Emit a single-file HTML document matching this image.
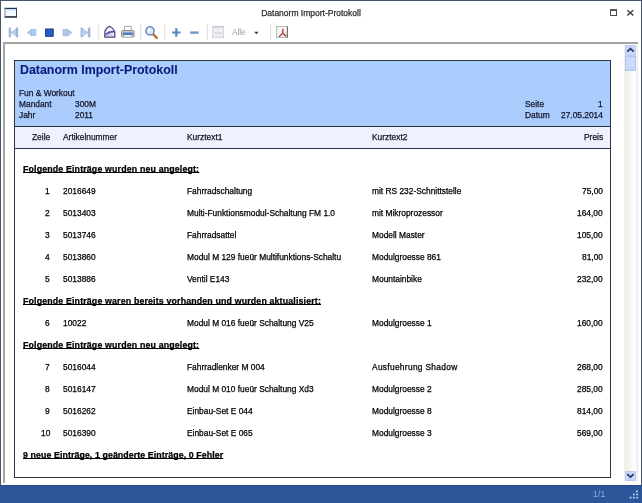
<!DOCTYPE html>
<html><head><meta charset="utf-8">
<style>
*{margin:0;padding:0;box-sizing:border-box}
html,body{width:642px;height:503px;overflow:hidden;background:#fff;font-family:"Liberation Sans",sans-serif}
.a{position:absolute}
.t{position:absolute;white-space:pre;will-change:transform;-webkit-text-stroke:0.25px currentColor}
</style></head><body>
<div class="a" style="left:0;top:0;width:642px;height:503px;background:#fff;border:1px solid #465670;border-bottom:none"></div>
<!-- title bar -->
<svg class="a" style="left:0;top:0" width="642" height="45" viewBox="0 0 642 45">
 <!-- window icon -->
 <rect x="4.5" y="7.8" width="12.5" height="9.8" fill="#f2f8ff"/>
 <rect x="4.5" y="7.8" width="12.5" height="1.5" fill="#1c3050"/>
 <rect x="4.5" y="16.2" width="12.5" height="1.5" fill="#1a2034"/>
 <rect x="4.5" y="7.8" width="1" height="9.9" fill="#8a92a2"/>
 <rect x="16" y="7.8" width="1" height="9.9" fill="#3a4050"/>
 <rect x="5.5" y="9.3" width="10.5" height="1.5" fill="#d8ecfc"/>
 <!-- maximize -->
 <rect x="610.5" y="10" width="6" height="5.5" fill="none" stroke="#4a4a4a" stroke-width="1"/>
 <rect x="610" y="9.2" width="7" height="1.6" fill="#4a4a4a"/>
 <!-- close -->
 <path d="M627.3 10.2L633.3 15.4M633.3 10.2L627.3 15.4" stroke="#464646" stroke-width="1.4"/>
 <!-- toolbar: first -->
 <g fill="#a6bbe0" stroke="#94aad6" stroke-width="0.6">
  <rect x="9" y="28" width="1.8" height="9"/>
  <path d="M17.6 28.2L11 32.5L17.6 36.8Z" fill="#bcd0f0"/>
  <rect x="16.2" y="28" width="1.6" height="9"/>
 </g>
 <!-- prev -->
 <g stroke="#9cb2dc" stroke-width="0.6">
  <path d="M32 29L27 32.5L32 36Z" fill="#b4c8ec"/>
  <rect x="31.5" y="29.3" width="4.4" height="6.4" fill="#a8d0f4"/>
 </g>
 <!-- stop -->
 <rect x="45.6" y="29" width="7.6" height="7.3" fill="#2262c4" stroke="#153a84" stroke-width="1"/>
 <!-- next -->
 <g stroke="#9cb2dc" stroke-width="0.6">
  <rect x="63" y="29.3" width="4.4" height="6.6" fill="#b0cce8"/>
  <path d="M67 29L72 32.6L67 36.2Z" fill="#b4c8ec"/>
 </g>
 <!-- last -->
 <g fill="#a6bbe0" stroke="#94aad6" stroke-width="0.6">
  <rect x="81" y="28" width="1.6" height="9"/>
  <path d="M81.4 28.2L88 32.5L81.4 36.8Z" fill="#bcd0f0"/>
  <rect x="88.2" y="28" width="1.8" height="9"/>
 </g>
 <!-- separators -->
 <g fill="#dcdcd8">
  <rect x="98.3" y="24" width="1" height="16"/>
  <rect x="140.2" y="24" width="1" height="16"/>
  <rect x="164.3" y="24" width="1" height="16"/>
  <rect x="206.8" y="24" width="1" height="16"/>
  <rect x="270.2" y="24" width="1" height="16"/>
 </g>
 <!-- mail -->
 <path d="M104.8 31.6Q106.2 27.6 109.6 26.2Q113.2 27.8 114.8 31.8V37.2H104.8Z" fill="#f2f0fc" stroke="#48407a" stroke-width="1.2"/>
 <path d="M105.3 33.8Q109 30 114.3 30.8V32.4Q110.2 32.2 105.3 35.4Z" fill="#6454b0"/>
 <path d="M105.4 36.8L109.6 34.2L114.2 36.8" fill="none" stroke="#9890c8" stroke-width="0.8"/>
 <!-- printer -->
 <rect x="124.6" y="26.3" width="6.6" height="5" fill="#fff" stroke="#9a9a9a" stroke-width="0.9"/>
 <rect x="121.5" y="30.5" width="12.6" height="6.6" rx="1" fill="#c4c4c4" stroke="#8c8c8c" stroke-width="0.9"/>
 <rect x="122.8" y="32.6" width="10" height="2.2" fill="#3a78c8"/>
 <rect x="124.5" y="35.2" width="6.8" height="1.6" fill="#f0f0f0"/>
 <!-- magnifier -->
 <path d="M153.2 34.4L156.8 37.9" stroke="#b8742c" stroke-width="2.3" stroke-linecap="round"/>
 <circle cx="150" cy="30.9" r="4.1" fill="#d8e6fc" stroke="#3e60a8" stroke-width="1.1"/>
 <circle cx="149.2" cy="30.2" r="1.6" fill="#ffffff" opacity="0.8"/>
 <!-- plus -->
 <path d="M172.2 32.5H180.5M176.3 28.3V36.7" stroke="#5886c0" stroke-width="2.2"/>
 <!-- minus -->
 <path d="M190.2 32.6H198.6" stroke="#7096c8" stroke-width="2.4"/>
 <!-- page disabled -->
 <rect x="212.6" y="26.4" width="11" height="11" fill="#eeeef4" stroke="#d2d2da" stroke-width="1"/>
 <rect x="212.6" y="26" width="11" height="1.6" fill="#c8c8d0"/>
 <rect x="214.5" y="32.6" width="7.5" height="0.9" fill="#c4c4cc"/>
 <!-- dropdown arrow -->
 <path d="M254.2 31.8H258.6L256.4 34.2Z" fill="#383838"/>
 <!-- pdf -->
 <rect x="276.5" y="26.5" width="11" height="11" fill="#fcf6f6" stroke="#b4bab4" stroke-width="1"/>
 <rect x="276" y="26.5" width="1.2" height="11" fill="#a8c8b8"/>
 <rect x="286.8" y="26.5" width="1.2" height="11" fill="#707070"/>
 <path d="M282.8 28.8V33.2L279 36.8M282.8 33.2L286.2 36.4" fill="none" stroke="#b04a4a" stroke-width="1.5"/>
</svg>
<div class="t" style="left:0;width:622px;text-align:center;top:7px;font-size:8.5px;line-height:12px;color:#2e2e2e">Datanorm Import-Protokoll</div>
<div class="t" style="left:231.8px;top:26.6px;font-size:8.2px;line-height:12px;color:#9a9a9a;-webkit-text-stroke:0">Alle</div>
<!-- doc area -->
<div class="a" style="left:3px;top:42px;width:635px;height:441px;border-top:2px solid #a4a49e;border-left:2px solid #a8a8a2;background:#fff"></div>
<!-- page border -->
<div class="a" style="left:14px;top:60px;width:597px;height:418px;border:1px solid #2e3440;background:#fff"></div>
<!-- blue header -->
<div class="a" style="left:15px;top:61px;width:595px;height:65px;background:#abcdfd"></div>
<div class="a" style="left:15px;top:126px;width:595px;height:1px;background:#2a3446"></div>
<div class="a" style="left:15px;top:127px;width:595px;height:21px;background:#eef1fe"></div>
<div class="a" style="left:15px;top:148px;width:595px;height:1px;background:#2a3446"></div>
<div class="t" style="left:20px;top:63.70px;font-size:12.4px;line-height:12px;font-weight:bold;color:#0c1a7c;-webkit-text-stroke:0.1px currentColor;">Datanorm Import-Protokoll</div>
<div class="t" style="left:19px;top:87.09px;font-size:8.4px;line-height:12px;font-weight:normal;color:#141428;">Fun &amp; Workout</div>
<div class="t" style="left:19px;top:98.09px;font-size:8.4px;line-height:12px;font-weight:normal;color:#141428;">Mandant</div>
<div class="t" style="left:75px;top:98.09px;font-size:8.4px;line-height:12px;font-weight:normal;color:#141428;">300M</div>
<div class="t" style="left:19px;top:109.09px;font-size:8.4px;line-height:12px;font-weight:normal;color:#141428;">Jahr</div>
<div class="t" style="left:75px;top:109.09px;font-size:8.4px;line-height:12px;font-weight:normal;color:#141428;">2011</div>
<div class="t" style="left:525px;top:98.09px;font-size:8.4px;line-height:12px;font-weight:normal;color:#141428;">Seite</div>
<div class="t" style="right:39px;text-align:right;top:98.09px;font-size:8.4px;line-height:12px;font-weight:normal;color:#141428;">1</div>
<div class="t" style="left:525px;top:109.09px;font-size:8.4px;line-height:12px;font-weight:normal;color:#141428;">Datum</div>
<div class="t" style="right:39px;text-align:right;top:109.09px;font-size:8.4px;line-height:12px;font-weight:normal;color:#141428;">27.05.2014</div>
<div class="t" style="right:592px;text-align:right;top:131.09px;font-size:8.4px;line-height:12px;font-weight:normal;color:#141428;">Zeile</div>
<div class="t" style="left:63px;top:131.09px;font-size:8.4px;line-height:12px;font-weight:normal;color:#141428;">Artikelnummer</div>
<div class="t" style="left:187.2px;top:131.09px;font-size:8.4px;line-height:12px;font-weight:normal;color:#141428;">Kurztext1</div>
<div class="t" style="left:371.8px;top:131.09px;font-size:8.4px;line-height:12px;font-weight:normal;color:#141428;">Kurztext2</div>
<div class="t" style="right:39px;text-align:right;top:131.09px;font-size:8.4px;line-height:12px;font-weight:normal;color:#141428;">Preis</div>
<div class="t" style="left:23px;top:163.45px;font-size:8.8px;line-height:12px;font-weight:bold;color:#000;text-decoration:underline;text-decoration-skip-ink:none;text-decoration-thickness:1px;text-underline-offset:0.2px;letter-spacing:0.16px;">Folgende Einträge wurden neu angelegt:</div>
<div class="t" style="right:592px;text-align:right;top:185.19px;font-size:8.4px;line-height:12px;font-weight:normal;color:#000;">1</div>
<div class="t" style="left:63px;top:185.19px;font-size:8.4px;line-height:12px;font-weight:normal;color:#000;">2016649</div>
<div class="t" style="left:187.4px;top:185.19px;font-size:8.4px;line-height:12px;font-weight:normal;color:#000;">Fahrradschaltung</div>
<div class="t" style="left:371.8px;top:185.19px;font-size:8.4px;line-height:12px;font-weight:normal;color:#000;">mit RS 232-Schnittstelle</div>
<div class="t" style="right:39px;text-align:right;top:185.19px;font-size:8.4px;line-height:12px;font-weight:normal;color:#000;">75,00</div>
<div class="t" style="right:592px;text-align:right;top:207.19px;font-size:8.4px;line-height:12px;font-weight:normal;color:#000;">2</div>
<div class="t" style="left:63px;top:207.19px;font-size:8.4px;line-height:12px;font-weight:normal;color:#000;">5013403</div>
<div class="t" style="left:187.4px;top:207.19px;font-size:8.4px;line-height:12px;font-weight:normal;color:#000;">Multi-Funktionsmodul-Schaltung FM 1.0</div>
<div class="t" style="left:371.8px;top:207.19px;font-size:8.4px;line-height:12px;font-weight:normal;color:#000;">mit Mikroprozessor</div>
<div class="t" style="right:39px;text-align:right;top:207.19px;font-size:8.4px;line-height:12px;font-weight:normal;color:#000;">164,00</div>
<div class="t" style="right:592px;text-align:right;top:229.19px;font-size:8.4px;line-height:12px;font-weight:normal;color:#000;">3</div>
<div class="t" style="left:63px;top:229.19px;font-size:8.4px;line-height:12px;font-weight:normal;color:#000;">5013746</div>
<div class="t" style="left:187.4px;top:229.19px;font-size:8.4px;line-height:12px;font-weight:normal;color:#000;">Fahrradsattel</div>
<div class="t" style="left:371.8px;top:229.19px;font-size:8.4px;line-height:12px;font-weight:normal;color:#000;">Modell Master</div>
<div class="t" style="right:39px;text-align:right;top:229.19px;font-size:8.4px;line-height:12px;font-weight:normal;color:#000;">105,00</div>
<div class="t" style="right:592px;text-align:right;top:251.19px;font-size:8.4px;line-height:12px;font-weight:normal;color:#000;">4</div>
<div class="t" style="left:63px;top:251.19px;font-size:8.4px;line-height:12px;font-weight:normal;color:#000;">5013860</div>
<div class="t" style="left:187.4px;top:251.19px;font-size:8.4px;line-height:12px;font-weight:normal;color:#000;">Modul M 129 fueür Multifunktions-Schaltu</div>
<div class="t" style="left:371.8px;top:251.19px;font-size:8.4px;line-height:12px;font-weight:normal;color:#000;">Modulgroesse 861</div>
<div class="t" style="right:39px;text-align:right;top:251.19px;font-size:8.4px;line-height:12px;font-weight:normal;color:#000;">81,00</div>
<div class="t" style="right:592px;text-align:right;top:273.19px;font-size:8.4px;line-height:12px;font-weight:normal;color:#000;">5</div>
<div class="t" style="left:63px;top:273.19px;font-size:8.4px;line-height:12px;font-weight:normal;color:#000;">5013886</div>
<div class="t" style="left:187.4px;top:273.19px;font-size:8.4px;line-height:12px;font-weight:normal;color:#000;">Ventil E143</div>
<div class="t" style="left:371.8px;top:273.19px;font-size:8.4px;line-height:12px;font-weight:normal;color:#000;">Mountainbike</div>
<div class="t" style="right:39px;text-align:right;top:273.19px;font-size:8.4px;line-height:12px;font-weight:normal;color:#000;">232,00</div>
<div class="t" style="left:23px;top:295.45px;font-size:8.8px;line-height:12px;font-weight:bold;color:#000;text-decoration:underline;text-decoration-skip-ink:none;text-decoration-thickness:1px;text-underline-offset:0.2px;letter-spacing:0.16px;">Folgende Einträge waren bereits vorhanden und wurden aktualisiert:</div>
<div class="t" style="right:592px;text-align:right;top:317.19px;font-size:8.4px;line-height:12px;font-weight:normal;color:#000;">6</div>
<div class="t" style="left:63px;top:317.19px;font-size:8.4px;line-height:12px;font-weight:normal;color:#000;">10022</div>
<div class="t" style="left:187.4px;top:317.19px;font-size:8.4px;line-height:12px;font-weight:normal;color:#000;">Modul M 016 fueür Schaltung V25</div>
<div class="t" style="left:371.8px;top:317.19px;font-size:8.4px;line-height:12px;font-weight:normal;color:#000;">Modulgroesse 1</div>
<div class="t" style="right:39px;text-align:right;top:317.19px;font-size:8.4px;line-height:12px;font-weight:normal;color:#000;">160,00</div>
<div class="t" style="left:23px;top:339.45px;font-size:8.8px;line-height:12px;font-weight:bold;color:#000;text-decoration:underline;text-decoration-skip-ink:none;text-decoration-thickness:1px;text-underline-offset:0.2px;letter-spacing:0.16px;">Folgende Einträge wurden neu angelegt:</div>
<div class="t" style="right:592px;text-align:right;top:361.19px;font-size:8.4px;line-height:12px;font-weight:normal;color:#000;">7</div>
<div class="t" style="left:63px;top:361.19px;font-size:8.4px;line-height:12px;font-weight:normal;color:#000;">5016044</div>
<div class="t" style="left:187.4px;top:361.19px;font-size:8.4px;line-height:12px;font-weight:normal;color:#000;">Fahrradlenker M 004</div>
<div class="t" style="left:371.8px;top:361.19px;font-size:8.4px;line-height:12px;font-weight:normal;color:#000;letter-spacing:0.3px;">Ausfuehrung Shadow</div>
<div class="t" style="right:39px;text-align:right;top:361.19px;font-size:8.4px;line-height:12px;font-weight:normal;color:#000;">268,00</div>
<div class="t" style="right:592px;text-align:right;top:383.19px;font-size:8.4px;line-height:12px;font-weight:normal;color:#000;">8</div>
<div class="t" style="left:63px;top:383.19px;font-size:8.4px;line-height:12px;font-weight:normal;color:#000;">5016147</div>
<div class="t" style="left:187.4px;top:383.19px;font-size:8.4px;line-height:12px;font-weight:normal;color:#000;">Modul M 010 fueür Schaltung Xd3</div>
<div class="t" style="left:371.8px;top:383.19px;font-size:8.4px;line-height:12px;font-weight:normal;color:#000;">Modulgroesse 2</div>
<div class="t" style="right:39px;text-align:right;top:383.19px;font-size:8.4px;line-height:12px;font-weight:normal;color:#000;">285,00</div>
<div class="t" style="right:592px;text-align:right;top:405.19px;font-size:8.4px;line-height:12px;font-weight:normal;color:#000;">9</div>
<div class="t" style="left:63px;top:405.19px;font-size:8.4px;line-height:12px;font-weight:normal;color:#000;">5016262</div>
<div class="t" style="left:187.4px;top:405.19px;font-size:8.4px;line-height:12px;font-weight:normal;color:#000;">Einbau-Set E 044</div>
<div class="t" style="left:371.8px;top:405.19px;font-size:8.4px;line-height:12px;font-weight:normal;color:#000;">Modulgroesse 8</div>
<div class="t" style="right:39px;text-align:right;top:405.19px;font-size:8.4px;line-height:12px;font-weight:normal;color:#000;">814,00</div>
<div class="t" style="right:592px;text-align:right;top:427.19px;font-size:8.4px;line-height:12px;font-weight:normal;color:#000;">10</div>
<div class="t" style="left:63px;top:427.19px;font-size:8.4px;line-height:12px;font-weight:normal;color:#000;">5016390</div>
<div class="t" style="left:187.4px;top:427.19px;font-size:8.4px;line-height:12px;font-weight:normal;color:#000;">Einbau-Set E 065</div>
<div class="t" style="left:371.8px;top:427.19px;font-size:8.4px;line-height:12px;font-weight:normal;color:#000;">Modulgroesse 3</div>
<div class="t" style="right:39px;text-align:right;top:427.19px;font-size:8.4px;line-height:12px;font-weight:normal;color:#000;">569,00</div>
<div class="t" style="left:23px;top:449.45px;font-size:8.8px;line-height:12px;font-weight:bold;color:#000;text-decoration:underline;text-decoration-skip-ink:none;text-decoration-thickness:1px;text-underline-offset:0.2px;letter-spacing:0.09px;">9 neue Einträge, 1 geänderte Einträge, 0 Fehler</div>

<!-- scrollbar -->
<div class="a" style="left:624px;top:45px;width:14px;height:436px;background:linear-gradient(to right,#f2f1e9 0%,#f4f3ed 40%,#fbfbfd 55%,#fcfbff 85%,#e4e2e6 100%)"></div>
<div class="a" style="left:625px;top:45px;width:11px;height:11px;background:#ccd6f8;border:1px solid #bcc8f0;border-radius:1px"></div>
<svg class="a" style="left:625px;top:45px" width="11" height="11" viewBox="0 0 11 11"><path d="M2.3 6.6L5.5 3.6L8.7 6.6" fill="none" stroke="#27386a" stroke-width="1.7"/></svg>
<div class="a" style="left:625px;top:56px;width:11px;height:14.5px;background:#c6d6fa;border:1px solid #b4c6ee"></div>
<div class="a" style="left:627px;top:59px;width:7px;height:1px;background:#d8e4fc"></div>
<div class="a" style="left:627px;top:62px;width:7px;height:1px;background:#d8e4fc"></div>
<div class="a" style="left:627px;top:65px;width:7px;height:1px;background:#d8e4fc"></div>
<div class="a" style="left:625px;top:470.5px;width:11px;height:10.5px;background:#ccd6f8;border:1px solid #bcc8f0;border-radius:1px"></div>
<svg class="a" style="left:625px;top:471px" width="11" height="10" viewBox="0 0 11 10"><path d="M2.3 3.2L5.5 6.2L8.7 3.2" fill="none" stroke="#27386a" stroke-width="1.7"/></svg>
<!-- status bar -->
<div class="a" style="left:0;top:485px;width:642px;height:18px;background:#2b579a;border-top:1px solid #234a86"></div>
<div class="t" style="left:593px;top:485.3px;font-size:8.5px;line-height:18px;color:#94b0d8;-webkit-text-stroke:0;letter-spacing:0.2px">1/1</div>
<svg class="a" style="left:626px;top:487px" width="14" height="14" viewBox="0 0 14 14" fill="#c4d6f0">
 <rect x="10" y="3.5" width="1.7" height="1.7"/><rect x="7" y="6.6" width="1.7" height="1.7"/><rect x="10.3" y="6.6" width="1.7" height="1.7"/>
 <rect x="3.7" y="9.8" width="1.7" height="1.7"/><rect x="7" y="9.8" width="1.7" height="1.7"/><rect x="10.3" y="9.8" width="1.7" height="1.7"/>
</svg>
</body></html>
